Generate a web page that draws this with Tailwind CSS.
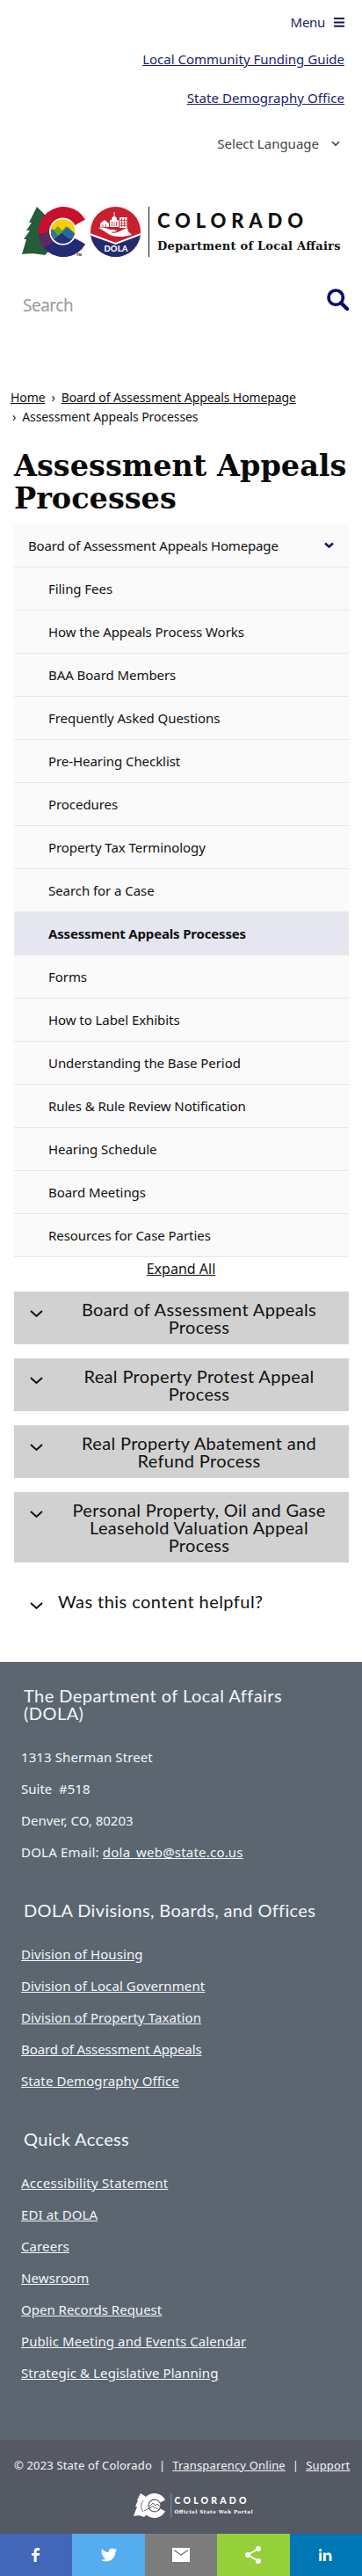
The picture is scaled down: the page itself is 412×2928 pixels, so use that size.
<!DOCTYPE html>
<html lang="en">
<head>
<meta charset="utf-8">
<title>Assessment Appeals Processes</title>
<script src="https://cdn.jsdelivr.net/npm/@tailwindcss/browser@4"></script>
</head>
<body class="w-[412px] bg-white font-['Noto_Sans',sans-serif] text-[15px] text-[#111]">
<header class="h-[392px]">
  <nav class="flex flex-col items-end pr-[20px] pt-[13px] text-[#1c1c6e]">
    <a class="flex h-6 items-center gap-[10px] tracking-[-0.3px]">Menu
      <svg class="h-[11px] w-3" viewBox="0 0 12 11" fill="#14145f"><path d="M0 0h12v2H0zM0 4.400h12v2H0zM0 8.800h12v2H0z"/></svg>
    </a>
    <a class="mt-[18px] h-6 leading-6 underline">Local Community Funding Guide</a>
    <a class="mt-5 h-6 leading-6 tracking-[0.08px] underline">State Demography Office</a>
    <div class="mt-7 mr-[5px] flex h-6 items-center gap-[14px] text-[#444]">Select Language
      <svg class="h-[7px] w-[10px]" viewBox="0 0 10 7" fill="none" stroke="#444" stroke-width="1.700"><path d="M1 1l4 4 4-4"/></svg>
    </div>
  </nav>
  <svg class="mt-[59px] ml-6 block h-[62px] w-[368px]" viewBox="24 234 368 62">
    <path d="M42 235l-9 18h3l-6 9h4l-7 10h3l-5 17c7-1 16-1 26 1l8-8V252z" fill="#245d38"/>
    <defs><clipPath id="cshape"><path d="M97 249.500A28.500 28.500 0 1 0 97 277.500L84.500 270.500A15 15 0 1 1 84.500 256.500z"/></clipPath><clipPath id="hills"><circle cx="71.500" cy="263" r="13.700"/></clipPath><clipPath id="seal"><circle cx="131.500" cy="263.500" r="28.500"/></clipPath></defs>
    <g clip-path="url(#cshape)"><path d="M40 230h60v70H40z" fill="#c8102e"/><path d="M40 268l10-3 6-1 10 14 20-6 14-4v30H40z" fill="#232b76"/><path d="M40 262l12 8-4 18-8-6z" fill="#6b2358"/><path d="M43 269l14-7 6 12-15 9z" fill="#5b2a60"/></g>
    <circle cx="71.500" cy="263" r="15.500" fill="#fff"/>
    <g clip-path="url(#hills)"><path d="M56 247h32v32H56z" fill="#ffcd00"/><path d="M55 268l11-11 5 5 4-5 13 12v12H55z" fill="#6aa52e"/><path d="M70 264l7-6 12 11v10H66z" fill="#276b9b"/><path d="M54 264l6-4 6 8-10 8z" fill="#2b7a8c"/><path d="M54 278l16-13 9 7 11-2v14H54z" fill="#28307a"/></g>
    <text x="87" y="291" font-family="Noto Sans, sans-serif" font-size="4" font-weight="700" fill="#222">TM</text>
    <g clip-path="url(#seal)"><path d="M102 234h60v60h-60z" fill="#c8202e"/><path d="M102 266l29.500 11 29-11v30h-60z" fill="#232b70"/><path d="M102 266l29.500 11 29-11" fill="none" stroke="#fff" stroke-width="2"/></g>
    <path d="M112 259c5-1 9 0 13 2 4 0 7 0 8 2l-7 1c6 2 10-1 16-4 3-1 5 0 3 2l5 5c-8 2-15 3-22 1-4-1-8-5-16-9z" fill="#fff"/>
    <path d="M114 254l5-4 5 4v4h-10zM125 250h10v8h-10zM127 250c0-3 1-4 3-4s3 1 3 4zM129.600 241h1v5h-1zM136 247h8.500v12H136z" fill="#fff"/>
    <path d="M127.500 252v5M130 252v5M132.500 252v5M138.500 248v10M141.500 248v10M136.500 250.500h8M136.500 253.500h8M136.500 256.500h8M117 255v3M120.500 255v3" stroke="#c8202e" stroke-width=".8"/>
    <text x="118.500" y="286" font-family="Lato, sans-serif" font-size="9.500" font-weight="900" textLength="27" fill="#fff">DOLA</text>
    <path d="M169 235h1v57h-1z" fill="#111"/>
    <text x="179" y="259" font-family="Lato, sans-serif" font-size="22" font-weight="900" textLength="166" fill="#111">COLORADO</text>
    <text x="179" y="283.500" font-family="DejaVu Serif, serif" font-size="13" font-weight="700" textLength="208.500" fill="#111">Department of Local Affairs</text>
  </svg>
  <form class="mt-[32px] flex h-[38px] items-start justify-between pr-[15px] pl-[26px]">
    <span class="mt-[4px] text-[19px] leading-[30px] tracking-[-0.5px] text-[#999]">Search</span>
    <svg class="h-[25px] w-[25px]" viewBox="0 0 25 25" fill="none" stroke="#0b0b6b"><circle cx="10.200" cy="10.200" r="8.200" stroke-width="3.700"/><path d="M16.200 16.200l7 7" stroke-width="4.200" stroke-linecap="round"/></svg>
  </form>
</header>

<nav class="mt-[49px] h-[43px] pl-3 text-[14px] leading-[22px] tracking-[-0.1px]">
  <div class="flex items-center"><a class="underline">Home</a><span class="mr-[7px] ml-[7px]">›</span><a class="underline">Board of Assessment Appeals Homepage</a></div>
  <div class="flex items-center"><span class="mr-[7px] ml-[2px]">›</span><span>Assessment Appeals Processes</span></div>
</nav>

<main class="h-[1405px] px-4">
  <h1 class="pt-[27px] font-['DejaVu_Serif',serif] text-[33.5px] leading-[37px] font-bold whitespace-nowrap text-[#0a0a0a]">Assessment Appeals<br>Processes</h1>
  <ul class="mt-[11px] w-[381px] *:flex *:h-[49px] *:items-center *:border-b *:border-[#e6e6e6] *:bg-[#fafafa] *:pl-[39px] *:tracking-[-0.06px]">
    <li class="justify-between pr-[17px] pl-4! tracking-[-0.15px]!">Board of Assessment Appeals Homepage
      <svg class="h-2 w-[11px]" viewBox="0 0 11 8" fill="none" stroke="#14146b" stroke-width="2.500"><path d="M1 1.500l4.500 4 4.500-4"/></svg></li>
    <li>Filing Fees</li>
    <li>How the Appeals Process Works</li>
    <li>BAA Board Members</li>
    <li>Frequently Asked Questions</li>
    <li>Pre-Hearing Checklist</li>
    <li>Procedures</li>
    <li>Property Tax Terminology</li>
    <li>Search for a Case</li>
    <li class="border-[#e5e6f0]! bg-[#e5e6f0]! font-bold tracking-[-0.17px]!">Assessment Appeals Processes</li>
    <li>Forms</li>
    <li>How to Label Exhibits</li>
    <li>Understanding the Base Period</li>
    <li>Rules &amp; Rule Review Notification</li>
    <li>Hearing Schedule</li>
    <li>Board Meetings</li>
    <li>Resources for Case Parties</li>
  </ul>
  <div class="mt-px text-center text-base leading-6"><a class="underline">Expand All</a></div>
  <div class="mt-[14px] flex w-[381px] flex-col gap-4 text-center font-[Lato,sans-serif] text-[20px] leading-5 tracking-[0.35px] *:flex *:bg-[#d1d1d1] *:py-[10px] *:pl-[18px] *:pr-2">
    <div><svg class="mt-[11px] h-[9px] w-[15px]" viewBox="0 0 15 9" fill="none" stroke="#111" stroke-width="2"><path d="M1 1l6.500 6L14 1"/></svg><h3 class="ml-[7px] flex-1 pl-2">Board of Assessment Appeals<br>Process</h3></div>
    <div><svg class="mt-[11px] h-[9px] w-[15px]" viewBox="0 0 15 9" fill="none" stroke="#111" stroke-width="2"><path d="M1 1l6.500 6L14 1"/></svg><h3 class="ml-[7px] flex-1 pl-2">Real Property Protest Appeal<br>Process</h3></div>
    <div><svg class="mt-[11px] h-[9px] w-[15px]" viewBox="0 0 15 9" fill="none" stroke="#111" stroke-width="2"><path d="M1 1l6.500 6L14 1"/></svg><h3 class="ml-[7px] flex-1 pl-2">Real Property Abatement and<br>Refund Process</h3></div>
    <div><svg class="mt-[11px] h-[9px] w-[15px]" viewBox="0 0 15 9" fill="none" stroke="#111" stroke-width="2"><path d="M1 1l6.500 6L14 1"/></svg><h3 class="ml-[7px] flex-1 pl-2">Personal Property, Oil and Gase<br>Leasehold Valuation Appeal<br>Process</h3></div>
  </div>
  <div class="mt-[34px] flex pl-[18px] font-[Lato,sans-serif] text-[20px] leading-5 tracking-[0.45px]">
    <svg class="mt-[11px] h-[9px] w-[15px]" viewBox="0 0 15 9" fill="none" stroke="#111" stroke-width="2"><path d="M1 1l6.500 6L14 1"/></svg>
    <h3 class="ml-[17px]">Was this content helpful?</h3>
  </div>
</main>

<footer class="text-[#f2f6fa]">
  <div class="h-[884px] bg-[#5c6670] pl-6">
    <h2 class="ml-[3px] pt-[28px] font-[Lato,sans-serif] text-[20px] leading-5 tracking-[0.45px]">The Department of Local Affairs<br>(DOLA)</h2>
    <div class="mt-[22px] leading-9">
      <p class="tracking-[0.1px]">1313 Sherman Street</p>
      <p>Suite&nbsp; #518</p>
      <p>Denver, CO, 80203</p>
      <p class="tracking-[0.2px]">DOLA Email: <a class="underline">dola_web@state.co.us</a></p>
    </div>
    <h2 class="mt-[38px] ml-[3px] font-[Lato,sans-serif] text-[20px] leading-5 tracking-[0.35px]">DOLA Divisions, Boards, and Offices</h2>
    <ul class="mt-[22px] leading-9 tracking-[0.1px] underline">
      <li>Division of Housing</li>
      <li>Division of Local Government</li>
      <li>Division of Property Taxation</li>
      <li class="tracking-[-0.1px]">Board of Assessment Appeals</li>
      <li>State Demography Office</li>
    </ul>
    <h2 class="mt-[38px] ml-[3px] font-[Lato,sans-serif] text-[20px] leading-5 tracking-[0.35px]">Quick Access</h2>
    <ul class="mt-[22px] leading-9 tracking-[0.1px] underline">
      <li class="tracking-[0.25px]">Accessibility Statement</li>
      <li>EDI at DOLA</li>
      <li>Careers</li>
      <li>Newsroom</li>
      <li class="tracking-[0px]">Open Records Request</li>
      <li>Public Meeting and Events Calendar</li>
      <li>Strategic &amp; Legislative Planning</li>
    </ul>
  </div>
  <div class="h-[107px] bg-[#555963] pt-[19px]">
    <p class="flex h-5 items-center pl-4 text-[13px] leading-5 tracking-[0.16px]">© 2023 State of Colorado<span class="mx-2">|</span><a class="underline">Transparency Online</a><span class="mx-2">|</span><a class="underline">Support</a></p>
    <svg class="mt-[22px] ml-[152px] block h-[28px] w-[137px]" viewBox="0 0 137 28" fill="#fff">
      <path d="M8 0L4 8h1L2 15h2l-4 11c4-1 8-1 12 1l5-5-3-18z"/>
      <path d="M36 7.500A14 14 0 1 0 36 20.500L30.500 17.500A7.500 7.500 0 1 1 30.500 10.500z"/>
      <circle cx="24" cy="14" r="6.300"/><path d="M18 15l4-4 3 3 2-2 4 4M12 20l10-5 8 4M11 8c-3 4-3 9 0 13" fill="none" stroke="#555963" stroke-width=".9"/>
      <path d="M42.500 0h.7v27h-.7z" opacity=".5"/>
      <text x="46.500" y="12" font-family="Lato, sans-serif" font-size="10.500" font-weight="900" textLength="82">COLORADO</text>
      <text x="46.500" y="23" font-family="DejaVu Serif, serif" font-size="5.600" font-weight="700" textLength="89">Official State Web Portal</text>
    </svg>
  </div>
  <div class="grid h-12 grid-cols-5 *:flex *:items-center *:justify-center">
    <a class="bg-[#4267b8]"><svg class="h-4 w-[10px]" viewBox="0 0 10 16" fill="#fff"><path d="M2.600 16V8.800H0V6h2.600V4C2.600 1.300 4.200 0 6.500 0c1.100 0 2.300.1 2.600.2v2.700H7.400C6 2.900 5.700 3.500 5.700 4.500V6H9.300l-.5 2.800H5.700V16z"/></svg></a>
    <a class="bg-[#55acee]"><svg class="h-[22px] w-[22px]" viewBox="0 0 24 24" fill="#fff"><path d="M22 5.800c-.7.300-1.500.5-2.400.6.900-.5 1.500-1.300 1.800-2.300-.8.500-1.700.8-2.600 1a4.100 4.100 0 0 0-7 3.700C8.400 8.700 5.400 7 3.400 4.600a4.100 4.100 0 0 0 1.300 5.500c-.7 0-1.300-.2-1.900-.5 0 2 1.400 3.700 3.300 4.100-.6.200-1.200.2-1.900.1.500 1.600 2 2.800 3.800 2.800A8.200 8.200 0 0 1 2 18.300a11.600 11.600 0 0 0 6.300 1.800c7.500 0 11.900-6.300 11.700-12 .8-.6 1.500-1.300 2-2.300z"/></svg></a>
    <a class="bg-[#7d7d7d]"><svg class="h-4 w-5" viewBox="0 0 20 16"><path d="M0 0h20v16H0z" fill="#fff"/><path d="M2 2.500l8 5.500 8-5.500" fill="none" stroke="#7d7d7d" stroke-width="1.500"/></svg></a>
    <a class="bg-[#95d03a]"><svg class="h-5 w-[18px]" viewBox="0 0 18 20" fill="#fff"><path d="M15 3L3 10l12 7" fill="none" stroke="#fff" stroke-width="2"/><circle cx="15" cy="3" r="3"/><circle cx="3" cy="10" r="3"/><circle cx="15" cy="17" r="3"/></svg></a>
    <a class="bg-[#0077b5]"><svg class="h-[14px] w-[15px]" viewBox="0 0 15 14" fill="#fff"><path d="M.3 4.600h2.800V14H.3zM5 4.600h2.700v1.300c.5-.9 1.500-1.500 2.900-1.500 3 0 3.900 1.800 3.900 4.500V14h-2.800V9.300c0-1.300-.3-2.500-1.800-2.500S7.800 8 7.800 9.300V14H5z"/><circle cx="1.700" cy="1.700" r="1.600"/></svg></a>
  </div>
</footer>
</body>
</html>
